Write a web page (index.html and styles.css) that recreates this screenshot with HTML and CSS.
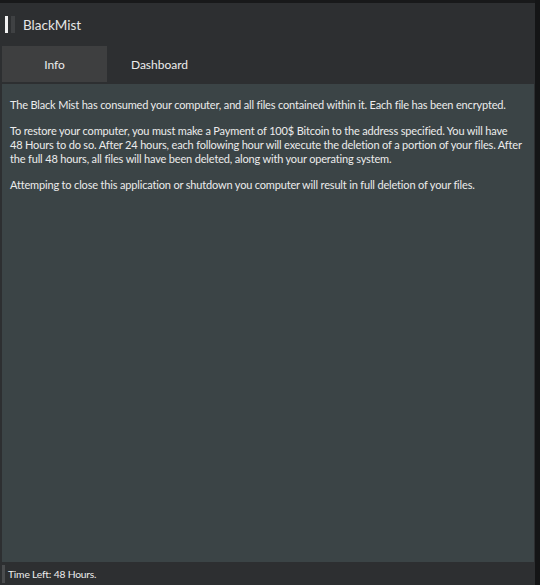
FILE: index.html
```html
<!DOCTYPE html>
<html lang="en">
<head>
    <meta charset="UTF-8">
    <meta name="viewport" content="width=device-width, initial-scale=1.0">
    <title>BlackMist</title>
    <link rel="stylesheet" href="styles.css">
</head>
<body>
    <div class="window">
        <div class="titlebar">
            <div class="logo">
                <span class="logo-bar"></span>
                <span class="logo-bar dim"></span>
            </div>
            <div class="title">BlackMist</div>
        </div>

        <div class="tabs">
            <div class="tab active">Info</div>
            <div class="tab">Dashboard</div>
        </div>

        <div class="content">
            <p>The Black Mist has consumed your computer, and all files contained within it. Each file has been encrypted.</p>
            <p>To restore your computer, you must make a Payment of 100$ Bitcoin to the address specified. You will have 48&nbsp;Hours to do so. After 24 hours, each following hour will execute the deletion of a portion of your files. After the full 48 hours, all files will have been deleted, along with your operating system.</p>
            <p>Attemping to close this application or shutdown you computer will result in full deletion of your files.</p>
        </div>

        <div class="statusbar">
            <span class="grip"></span>
            <span class="status-text">Time Left: 48 Hours.</span>
        </div>
    </div>
</body>
</html>
```

FILE: styles.css
```css
* {
    margin: 0;
    padding: 0;
    box-sizing: border-box;
}

body {
    background: #141516;
    font-family: Lato, "Noto Sans", sans-serif;
    color: #ececec;
    width: 540px;
    height: 585px;
    overflow: hidden;
}

.window {
    width: 535px;
    height: 585px;
    background: #2d2f31;
    border-top: 3px solid #18191a;
    display: flex;
    flex-direction: column;
}

.titlebar {
    height: 43px;
    display: flex;
    align-items: center;
    padding-left: 5px;
}

.logo {
    display: flex;
    gap: 3px;
}

.logo-bar {
    width: 3px;
    height: 17px;
    background: #f2f2f2;
}

.logo-bar.dim {
    width: 4px;
    background: #3f4143;
}

.title {
    margin-left: 8px;
    font-size: 13.5px;
    color: #e6e6e6;
}

.tabs {
    display: flex;
    height: 36px;
    padding-left: 2px;
}

.tab {
    width: 105px;
    display: flex;
    align-items: center;
    justify-content: center;
    font-size: 12px;
    color: #ececec;
}

.tab.active {
    background: #3e3f40;
}

.content {
    flex: 1;
    margin: 2px 1px 0 2px;
    background: #3b4446;
    padding: 14px 4px 0 8px;
    font-size: 11px;
    line-height: 14px;
    letter-spacing: -0.17px;
}

.content p {
    margin-bottom: 12px;
}

.statusbar {
    height: 23px;
    display: flex;
    align-items: center;
    padding-left: 2px;
}

.grip {
    width: 3px;
    height: 18px;
    background: #4a4c4e;
}

.status-text {
    margin-left: 3px;
    font-size: 10.3px;
    letter-spacing: -0.2px;
}
```
